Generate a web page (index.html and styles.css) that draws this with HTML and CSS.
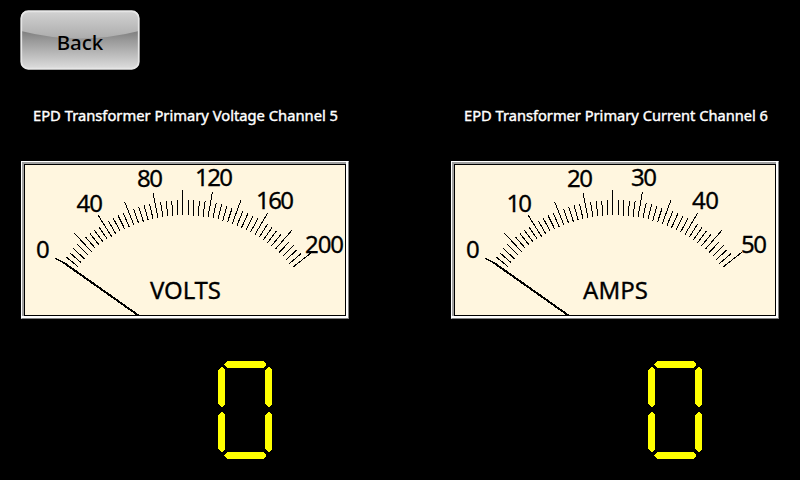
FILE: index.html
```
<!DOCTYPE html>
<html lang="en">
<head>
<meta charset="utf-8">
<title>EPD Transformer Primary</title>
<link rel="stylesheet" href="styles.css">
</head>
<body>
<header><button class="back" type="button">
<svg class="gloss" viewBox="0 0 120 60" aria-hidden="true">
<defs>
<linearGradient id="base" x2="0" y2="1"><stop offset="0" stop-color="#c4c4c4"/><stop offset=".33" stop-color="#7c7c7c"/><stop offset=".5" stop-color="#989898"/><stop offset="1" stop-color="#dedede"/></linearGradient>
<linearGradient id="shine" x2="0" y2="1"><stop offset="0" stop-color="#d2d2d2"/><stop offset="1" stop-color="#acacac"/></linearGradient>
</defs>
<rect x="1" y="1" width="118" height="58" rx="7" fill="url(#base)"/>
<path d="M1 21V8q0-7 7-7h104q7 0 7 7v13Q60 36 1 21z" fill="url(#shine)"/>
<rect x="1.25" y="1.25" width="117.5" height="57.5" rx="7" fill="none" stroke="#e6e6e6" stroke-width="1.8"/>
</svg>
<span class="back-label">Back</span></button></header>
<main>
<section class="channel">
<h2 class="title"><svg width="328" height="24"><text x="12" y="17" textLength="305" lengthAdjust="spacingAndGlyphs">EPD Transformer Primary Voltage Channel 5</text></svg></h2>
<div class="bezel"><svg class="dial" viewBox="24 164 322 152">
<rect class="frame" x="24.500" y="164.500" width="321" height="151"/>
<g class="ticks"></g>
<path class="needle" d="M63.5 262.5L138.500 315.500"/>
<g class="labels">
<text x="36" y="257.5" textLength="13">0</text><text x="76.5" y="212" textLength="26.5">40</text><text x="137" y="187" textLength="26">80</text><text x="195" y="186" textLength="38">120</text><text x="256" y="209" textLength="38">160</text><text x="305" y="253" textLength="39">200</text>
<text x="150" y="299" textLength="71">VOLTS</text></g>
</svg></div>
<svg class="digit" viewBox="0 0 54 98" role="img" aria-label="0"><use href="#zero"/></svg>
</section>
<section class="channel">
<h2 class="title"><svg width="328" height="24"><text x="13" y="17" textLength="304" lengthAdjust="spacingAndGlyphs">EPD Transformer Primary Current Channel 6</text></svg></h2>
<div class="bezel"><svg class="dial" viewBox="24 164 322 152">
<rect class="frame" x="24.500" y="164.500" width="321" height="151"/>
<g class="ticks"></g>
<path class="needle" d="M63.5 262.5L138.500 315.500"/>
<g class="labels">
<text x="36" y="257.5" textLength="13">0</text><text x="76.5" y="212" textLength="25.5">10</text><text x="137" y="187" textLength="26">20</text><text x="201" y="186" textLength="26">30</text><text x="262" y="209" textLength="27">40</text><text x="311" y="253" textLength="26">50</text>
<text x="153" y="299" textLength="65">AMPS</text></g>
</svg></div>
<svg class="digit" viewBox="0 0 54 98" role="img" aria-label="0">
<path id="zero" d="M9 0h36l3 3v1l-3 3H9L6 4V3zM9 91h36l3 3v1l-3 3H9l-3-3v-1zM0 9l3-3h1l3 3v34l-3 3H3l-3-3zM47 9l3-3h1l3 3v34l-3 3h-1l-3-3zM0 54l3-3h1l3 3v34l-3 3H3l-3-3zM47 54l3-3h1l3 3v34l-3 3h-1l-3-3z"/></svg>
</section>
</main>
<script src="dial.js"></script>
</body>
</html>
```

FILE: styles.css
```
* { box-sizing: border-box; }
body { margin: 0; width: 800px; height: 480px; overflow: hidden; background: #000; font-family: "Noto Sans", "Open Sans", sans-serif; }
header { height: 104px; padding: 10px 20px; }
.back { display: grid; width: 120px; height: 60px; padding: 0; border: 0; background: none; place-items: center; font: 500 20.5px "Noto Sans", sans-serif; color: #000; }
.gloss, .back-label { grid-area: 1 / 1; }
.gloss { width: 120px; height: 60px; }
.back-label { line-height: 24px; padding-top: 3px; }
main { display: grid; grid-template-columns: 328px 328px; column-gap: 102px; padding-left: 21px; }
.channel { display: flex; flex-direction: column; }
.title { margin: 0 0 33px; height: 24px; font-size: 14px; font-weight: 400; }
.title svg { display: block; }
.title text { fill: #fff; stroke: #fff; stroke-width: .4px; }
.bezel { height: 158px; border: 1px solid; border-color: #fff #808080 #808080 #fff; background: #fff; }
.dial { display: block; box-sizing: content-box; width: 322px; height: 152px; border: solid #a0a0a0; border-width: 2px 0 0 2px; background: #fff6df; overflow: visible; }
.frame { fill: none; stroke: #000; stroke-width: 1; shape-rendering: crispEdges; }
.ticks path { stroke: #000; stroke-width: 1; fill: none; shape-rendering: crispEdges; }
.needle { stroke: #000; stroke-width: 2; fill: none; shape-rendering: crispEdges; }
.labels { font-size: 24px; fill: #000; stroke: #000; stroke-width: .3px; }
.digit { width: 54px; height: 98px; margin: 42px 0 0 197px; fill: #ff0; shape-rendering: crispEdges; }
```

FILE: dial.js
```
// Fifty divisions; every fifth mark is long.
const cx = 184.9, cy = 352.5;
let d = "M55.5 258.5L63.5 262.5";
for (let i = 1; i <= 50; i++) {
  const a = (-53.3 + i * 2.1) * Math.PI / 180;
  const outer = i % 5 === 0 ? 162.5 : 152.5;
  const s = Math.sin(a), c = Math.cos(a);
  d += `M${cx + 137.2 * s} ${cy - 137.2 * c}L${cx + outer * s} ${cy - outer * c}`;
}
document.querySelectorAll(".ticks").forEach(g => {
  const p = document.createElementNS("http://www.w3.org/2000/svg", "path");
  p.setAttribute("d", d);
  g.appendChild(p);
});
```
